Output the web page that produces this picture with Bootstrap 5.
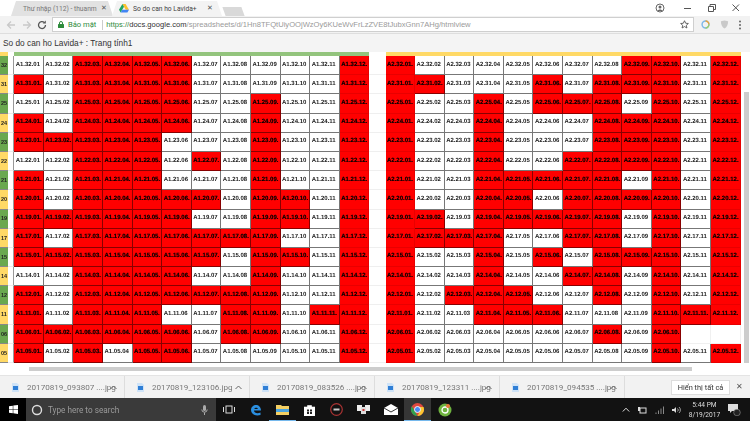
<!doctype html>
<html>

<head>
  <title>So do can ho Lavida+</title>
  <link href="https://cdn.jsdelivr.net/npm/bootstrap@5.3.0/dist/css/bootstrap.min.css" rel="stylesheet">
  <style>
    html, body { margin: 0; width: 750px; height: 421px; overflow: hidden; background: #fff; }
    body { font-family: "Liberation Sans", Arial, sans-serif; }
    .shot { width: 750px; height: 421px; filter: blur(.35px); }

    .tabstrip { height: 16px; background: #fff; }
    .tabshape { height: 15px; font: 6.7px Roboto, sans-serif; clip-path: polygon(0 100%, 5px 0, calc(100% - 5px) 0, 100% 100%); }
    .tab-off { width: 102px; margin-left: 11px; margin-top: 1px; background: #e2e2e2; color: #777; padding: 0 7px 0 8px; }
    .tab-on { width: 110px; margin-left: -1px; background: #f3f3f3; color: #444; padding: 0 9px 0 7px; }
    .tabtitle { white-space: nowrap; flex: 1; }
    .tabx { font-size: 7px; color: #555; line-height: 1; }
    .tabnew { width: 19px; height: 9px; margin: 5px 0 0 2px; background: #d9d9d9; transform: skewX(20deg); }
    .winbtns { gap: 14px; padding-right: 9px; }

    .toolbar { height: 18px; background: #f2f2f2; border-bottom: 1px solid #dedede; }
    .navbtns { width: 52px; padding: 0 5px 0 6px; }
    .omni { width: 642px; height: 15px; background: #fff; border: 1px solid #cfcfcf; font-size: 7.6px; padding-left: 5px; white-space: nowrap; overflow: hidden; }
    .sec-label { color: #2e8b3c; font-family: Roboto, sans-serif; font-size: 7.6px; }
    .sec-sep { width: 1px; height: 10px; background: #ccc; margin: 0 3px 0 6px; }
    .url-green { color: #2e8b3c; }
    .url-dark { color: #333; }
    .url-grey { color: #9a9a9a; }
    .omni-url { flex: 1; overflow: hidden; }
    .toolicons { flex: 1; padding: 0 8px 0 7px; }

    .docbar { height: 18px; background: #f4f4f4; font-size: 8.3px; color: #333; padding-left: 3px; line-height: 19px; }

    .sheet { height: 323px; position: relative; background: #fff; }
    .sheetgrid { display: grid; grid-template-columns: 8px 6.2px repeat(12, 29.6px) 16.2px repeat(12, 29.6px); grid-template-rows: 4px repeat(16, 19.2px); }
    .topnum { background: #ffd966; }
    .topgap { background: #fff; }
    .topgreen { grid-column: 3 / span 12; background: #93c47d; }
    .topyellow { grid-column: 16 / span 12; background: #ffd966; }
    .rownum { font-size: 5.5px; font-weight: 700; color: #222; display: flex; align-items: center; justify-content: center; border-bottom: 1px solid #888; overflow: hidden; }
    .num-g { background: #6aa84f; }
    .num-y { background: #ffd966; }
    .sidegap { border-bottom: 1px solid #ececec; border-right: 1px solid #999; }
    .midgap { border-bottom: 1px solid #efefef; }
    .unit { font-size: 6px; font-weight: 700; display: flex; align-items: center; padding-left: 1.5px; white-space: nowrap; overflow: hidden; border-right: 1px solid #777; border-bottom: 1px solid #777; color: #222; background: #fff; text-rendering: geometricPrecision; }
    .sold { background: #f00; color: #000; border-color: #800; -webkit-text-stroke: .15px #000; }
    .soldcol { border-color: #e80000; }
    .blankcell { border-color: #f0f0f0; }

    .hbar { height: 4px; margin: 4px 0 0 29px; width: 663px; background: #cdcdcd; }
    .vbar { position: absolute; right: 1px; top: 40px; width: 5px; height: 271px; background: #cdcdcd; }

    .shelf { height: 23px; background: #f2f2f2; border-top: 1px solid #e4e4e4; font: 8.1px Roboto, sans-serif; color: #777; }
    .dlitem { width: 125px; height: 100%; padding-left: 12px; border-right: 1px solid #ddd; flex-shrink: 0; }
    .dlname { width: 83px; margin-left: 8px; white-space: nowrap; }
    .showall { width: 59px; height: 15px; margin-left: 46px; background: #fff; border: 1px solid #ddd; color: #333; font-size: 7.4px; }
    .shelfx { margin-left: 6px; font-size: 8px; color: #555; line-height: 1; }

    .taskbar { height: 23px; background: #121212; }
    .startbtn { width: 26px; height: 100%; background: #000; }
    .searchbox { width: 190px; height: 100%; background: #3a3a3a; padding: 0 8px 0 5px; color: #9b9b9b; font: 8.2px Roboto, sans-serif; }
    .searchtext { flex: 1; margin-left: 5px; }
    .taskslot { width: 27px; height: 100%; flex-shrink: 0; }
    .slot-first { margin-left: -1px; }
    .slot-active { background: #363636; border-bottom: 1px solid #76b9ed; }
    .slot-mark { border-bottom: 1px solid #76b9ed; }
    .tray { flex: 1; padding-right: 9px; color: #ddd; font: 6.6px Roboto, sans-serif; }
    .clock { text-align: center; line-height: 10px; margin: 0 7px 0 7px; width: 33px; }
  </style>
</head>

<body>
  <div class="shot d-flex flex-column">

    <div class="tabstrip d-flex align-items-end">
      <div class="tabshape tab-off d-flex align-items-center gap-1">
        <svg width="9" height="7" viewBox="0 0 9 7"><path d="M.5 7V.5L4.500 4 8.500.5V7" fill="none" stroke="#d9443a" stroke-width="1.200"/></svg>
        <span class="tabtitle">Thư nhập (112) - thuanm</span>
        <span class="tabx">✕</span>
      </div>
      <div class="tabshape tab-on d-flex align-items-center gap-1">
        <svg width="10" height="9" viewBox="0 0 10 9"><path d="M3.400 0h3.200l3.400 5.800H6.700z" fill="#fbc02d"/><path d="M3.400 0L0 5.800 1.600 8.600 5 2.800z" fill="#1fa463"/><path d="M1.600 8.600h6.800L10 5.800H3.300z" fill="#4285f4"/></svg>
        <span class="tabtitle">So do can ho Lavida+</span>
        <span class="tabx">✕</span>
      </div>
      <div class="tabnew"></div>
      <div class="winbtns d-flex align-items-center ms-auto align-self-center">
        <svg class="me-1" width="10" height="10" viewBox="0 0 10 10"><circle cx="5" cy="5" r="4" fill="none" stroke="#666"/><circle cx="5" cy="4" r="1.500" fill="#666"/><path d="M2.500 8C3 6 7 6 7.500 8" fill="#666"/></svg>
        <svg width="10" height="10" viewBox="0 0 10 10"><path d="M1 5.500h7" stroke="#555"/></svg>
        <svg width="10" height="10" viewBox="0 0 10 10"><path d="M1.500 3.500h5v5h-5zM3 3.500V1.500h5.500v5H6.500" fill="none" stroke="#555"/></svg>
        <svg width="10" height="10" viewBox="0 0 10 10"><path d="M1.500 1.500l6.500 6.500M8 1.500L1.500 8" stroke="#555"/></svg>
      </div>
    </div>

    <div class="toolbar d-flex align-items-center">
      <div class="navbtns d-flex align-items-center justify-content-between">
        <svg width="10" height="10" viewBox="0 0 10 10"><path d="M9 5H1.500M5 1.500L1.500 5 5 8.500" fill="none" stroke="#c9c9c9" stroke-width="1.300"/></svg>
        <svg width="10" height="10" viewBox="0 0 10 10"><path d="M1 5h7.500M5 1.500L8.500 5 5 8.500" fill="none" stroke="#c9c9c9" stroke-width="1.300"/></svg>
        <svg width="10" height="10" viewBox="0 0 10 10"><path d="M8.500 5A3.500 3.500 0 1 1 7.300 2.400" fill="none" stroke="#555" stroke-width="1.300"/><path d="M8.800 .6v3H5.800z" fill="#555"/></svg>
      </div>
      <div class="omni d-flex align-items-center">
        <svg class="me-1" width="6" height="7" viewBox="0 0 6 7"><path d="M1.500 3V2a1.500 1.500 0 0 1 3 0v1" fill="none" stroke="#2e8b3c"/><rect y="3" width="6" height="4" rx=".5" fill="#2e8b3c"/></svg>
        <span class="sec-label">Bảo mật</span>
        <span class="sec-sep"></span>
        <span class="omni-url"><span class="url-green">https://</span><span class="url-dark">docs.google.com</span><span class="url-grey">/spreadsheets/d/1Hn8TFQtUiyOOjWzOy6KUeWvFrLzZVE8tJubxGnn7AHg/htmlview</span></span>
        <svg class="me-1" width="9" height="9" viewBox="0 0 10 10"><path d="M5 .8l1.300 2.800 3 .3-2.300 2 .7 3L5 7.300 2.300 8.900l.7-3-2.300-2 3-.3z" fill="none" stroke="#555"/></svg>
      </div>
      <div class="toolicons d-flex align-items-center justify-content-between">
        <svg width="9" height="9" viewBox="0 0 10 10"><circle cx="5" cy="5" r="3.800" fill="none" stroke="#7db7e8" stroke-width="1.600"/><path d="M5 1.200A3.800 3.800 0 0 1 8.800 5" fill="none" stroke="#e8a33d" stroke-width="1.600"/><path d="M8.800 5A3.800 3.800 0 0 1 5 8.800" fill="none" stroke="#9bd070" stroke-width="1.600"/></svg>
        <svg width="9" height="9" viewBox="0 0 10 10"><path d="M1 1.500L5 .5l4 1c0 4-1.500 7-4 8-2.500-1-4-4-4-8z" fill="#c9c9c9"/></svg>
        <svg width="4" height="10" viewBox="0 0 4 10"><circle cx="2" cy="1.500" r="1" fill="#666"/><circle cx="2" cy="5" r="1" fill="#666"/><circle cx="2" cy="8.500" r="1" fill="#666"/></svg>
      </div>
    </div>

    <div class="docbar">So do can ho Lavida+ : Trang tính1</div>

    <div class="sheet">
      <div id="grid" class="sheetgrid">
        <div class="topnum"></div>
        <div class="topgap"></div>
        <div class="topgreen"></div>
        <div class="topgap"></div>
        <div class="topyellow"></div>
      </div>
      <div class="hbar"></div>
      <div class="vbar"></div>
    </div>

    <div class="shelf d-flex align-items-center">
      <div class="dlitem d-flex align-items-center">
        <svg width="7" height="9" viewBox="0 0 7 9"><path d="M0 0h5l2 2v7H0z" fill="#cfe3f7"/><rect x="1" y="3" width="5" height="4" fill="#2f7fd6"/></svg>
        <span class="dlname">20170819_093807 ....jpg</span>
        <svg width="7" height="5" viewBox="0 0 7 5"><path d="M.5 4L3.500 1l3 3" fill="none" stroke="#666"/></svg>
      </div>
      <div class="dlitem d-flex align-items-center">
        <svg width="7" height="9" viewBox="0 0 7 9"><path d="M0 0h5l2 2v7H0z" fill="#cfe3f7"/><rect x="1" y="3" width="5" height="4" fill="#2f7fd6"/></svg>
        <span class="dlname">20170819_123106.jpg</span>
        <svg width="7" height="5" viewBox="0 0 7 5"><path d="M.5 4L3.500 1l3 3" fill="none" stroke="#666"/></svg>
      </div>
      <div class="dlitem d-flex align-items-center">
        <svg width="7" height="9" viewBox="0 0 7 9"><path d="M0 0h5l2 2v7H0z" fill="#cfe3f7"/><rect x="1" y="3" width="5" height="4" fill="#2f7fd6"/></svg>
        <span class="dlname">20170819_083526 ....jpg</span>
        <svg width="7" height="5" viewBox="0 0 7 5"><path d="M.5 4L3.500 1l3 3" fill="none" stroke="#666"/></svg>
      </div>
      <div class="dlitem d-flex align-items-center">
        <svg width="7" height="9" viewBox="0 0 7 9"><path d="M0 0h5l2 2v7H0z" fill="#cfe3f7"/><rect x="1" y="3" width="5" height="4" fill="#2f7fd6"/></svg>
        <span class="dlname">20170819_123311 ....jpg</span>
        <svg width="7" height="5" viewBox="0 0 7 5"><path d="M.5 4L3.500 1l3 3" fill="none" stroke="#666"/></svg>
      </div>
      <div class="dlitem d-flex align-items-center">
        <svg width="7" height="9" viewBox="0 0 7 9"><path d="M0 0h5l2 2v7H0z" fill="#cfe3f7"/><rect x="1" y="3" width="5" height="4" fill="#2f7fd6"/></svg>
        <span class="dlname">20170819_094535 ....jpg</span>
        <svg width="7" height="5" viewBox="0 0 7 5"><path d="M.5 4L3.500 1l3 3" fill="none" stroke="#666"/></svg>
      </div>
      <div class="showall d-flex align-items-center justify-content-center">Hiển thị tất cả</div>
      <span class="shelfx">✕</span>
    </div>

    <div class="taskbar d-flex align-items-center">
      <div class="startbtn d-flex align-items-center justify-content-center">
        <svg width="9" height="9" viewBox="0 0 9 9"><path d="M0 1.300L3.800.7v3.500H0zM4.300.6L9 0v4.200H4.300zM0 4.700h3.800v3.600L0 7.700zM4.300 4.700H9V9l-4.700-.7z" fill="#fff"/></svg>
      </div>
      <div class="searchbox d-flex align-items-center">
        <svg width="12" height="12" viewBox="0 0 12 12"><circle cx="6" cy="6" r="4.500" fill="none" stroke="#ddd" stroke-width="1.400"/></svg>
        <span class="searchtext">Type here to search</span>
        <svg width="7" height="10" viewBox="0 0 7 10"><rect x="2" y="0" width="3" height="6" rx="1.500" fill="#aaa"/><path d="M.8 4.500a2.700 2.700 0 0 0 5.400 0M3.500 7.500V10" fill="none" stroke="#aaa"/></svg>
      </div>
      <div class="taskslot slot-first d-flex align-items-center justify-content-center">
        <svg width="12" height="9" viewBox="0 0 12 9"><rect x="3" y="1" width="6" height="7" fill="none" stroke="#ddd"/><path d="M.5 2v5M11.500 2v5" stroke="#ddd"/></svg>
      </div>
      <div class="taskslot d-flex align-items-center justify-content-center">
        <svg width="12" height="12" viewBox="0 0 12 12"><path d="M1 6C1 3 3.500 1 6 1s5 2 5 5.500H4C4 9 7.500 10 10.500 8.500V11C6 12.500 1 10.500 1 6zM4.200 5h3.600C7.800 3.200 4.800 3.200 4.200 5z" fill="#2b8fe0"/></svg>
      </div>
      <div class="taskslot slot-mark d-flex align-items-center justify-content-center">
        <svg width="13" height="11" viewBox="0 0 13 11"><path d="M0 1h5l1 1h7v9H0z" fill="#f4cf62"/><rect y="5" width="13" height="3" fill="#4aa3df"/></svg>
      </div>
      <div class="taskslot d-flex align-items-center justify-content-center">
        <svg width="11" height="12" viewBox="0 0 11 12"><path d="M0 3h11v9H0zM3.500 3V1.500h4V3" fill="#fff" stroke="#fff" stroke-width=".6"/><path d="M3 5.500h2v2H3zM6 5.500h2v2H6zM3 8h2v2H3zM6 8h2v2H6z" fill="#222"/></svg>
      </div>
      <div class="taskslot d-flex align-items-center justify-content-center">
        <svg width="13" height="13" viewBox="0 0 13 13"><circle cx="6.500" cy="6.500" r="5.800" fill="#111" stroke="#a33" stroke-width="1.200"/><rect x="3.500" y="5.500" width="6" height="2" fill="#ccc"/></svg>
      </div>
      <div class="taskslot d-flex align-items-center justify-content-center">
        <svg width="13" height="11" viewBox="0 0 13 11"><rect x="0" y="1" width="5" height="6" fill="#eee"/><rect x="8" y="1" width="5" height="6" fill="#eee"/><rect x="4" y="3" width="5" height="7" fill="#ddd"/><rect x="5.500" y="5" width="2" height="2" fill="#c33"/></svg>
      </div>
      <div class="taskslot d-flex align-items-center justify-content-center">
        <svg width="14" height="11" viewBox="0 0 14 11"><path d="M0 4l7-4 7 4v7H0z" fill="#fff"/><path d="M0 4l7 4 7-4" fill="none" stroke="#333"/></svg>
      </div>
      <div class="taskslot slot-active d-flex align-items-center justify-content-center">
        <svg width="13" height="13" viewBox="0 0 13 13"><circle cx="6.500" cy="6.500" r="6.500" fill="#e0483e"/><path d="M6.500 13A6.500 6.500 0 0 1 .9 3.200L4 8.500z" fill="#2fa24e"/><path d="M6.500 13A6.500 6.500 0 0 0 12.500 4H6.500L8.800 8.500z" fill="#fbc531"/><circle cx="6.500" cy="6.500" r="3" fill="#4a8af4" stroke="#fff" stroke-width=".9"/></svg>
      </div>
      <div class="taskslot d-flex align-items-center justify-content-center">
        <svg width="14" height="14" viewBox="0 0 14 14"><circle cx="7" cy="7" r="6.500" fill="#6fb33f"/><circle cx="7" cy="7" r="3" fill="none" stroke="#fff" stroke-width="1.300"/><circle cx="10" cy="3" r="2" fill="#e8763a"/></svg>
      </div>
      <div class="tray d-flex align-items-center justify-content-end">
        <svg class="me-1" width="8" height="5" viewBox="0 0 8 5"><path d="M.8 4.500L4 1.200l3.200 3.300" fill="none" stroke="#ddd"/></svg>
        <svg class="mx-1" width="9" height="8" viewBox="0 0 9 8"><rect x="2" y="2" width="6" height="5" fill="none" stroke="#ddd"/><path d="M0 1h2v4H0z" fill="#ddd"/></svg>
        <svg class="mx-1" width="9" height="8" viewBox="0 0 9 8"><path d="M1 8V6.500M3.500 8V4.500M6 8V2.500M8.500 8V.5" stroke="#888"/></svg>
        <svg class="ms-1" width="9" height="8" viewBox="0 0 9 8"><path d="M0 3h2l2-2v6L2 5H0z" fill="#ddd"/><path d="M5.500 2.500a2 2 0 0 1 0 3M7 1a4 4 0 0 1 0 6" fill="none" stroke="#ddd" stroke-width=".7"/></svg>
        <div class="clock">5:44 PM<br>8/19/2017</div>
        <svg width="13" height="12" viewBox="0 0 13 12"><path d="M0 0h10v7H4L2 9V7H0z" fill="#ddd"/><circle cx="9" cy="8.500" r="3.300" fill="#222" stroke="#aaa" stroke-width=".5"/></svg>
      </div>
    </div>

  </div>

  <script src="https://cdn.jsdelivr.net/npm/bootstrap@5.3.0/dist/js/bootstrap.bundle.min.js"></script>
  <script>
    // floor, then the red units of block A1 and block A2
    const floors = [
      ["32", [3, 4, 5, 6, 12], [1, 9, 10, 12]],
      ["31", [1, 3, 4, 5, 6, 12], [1, 2, 6, 8, 9, 10, 12]],
      ["25", [3, 4, 5, 6, 9, 12], [1, 4, 6, 7, 8, 10, 12]],
      ["24", [1, 3, 4, 5, 6, 9, 12], [1, 4, 8, 9, 10, 12]],
      ["23", [1, 2, 3, 4, 5, 9, 12], [1, 4, 8, 9, 10, 12]],
      ["22", [3, 4, 5, 7, 9, 12], [1, 4, 7, 8, 9, 10, 12]],
      ["21", [1, 3, 4, 5, 9, 12], [1, 4, 5, 6, 7, 8, 10, 12]],
      ["20", [1, 3, 4, 5, 6, 7, 9, 10, 12], [1, 4, 5, 7, 8, 9, 10, 12]],
      ["19", [1, 2, 3, 4, 5, 6, 9, 10, 12], [1, 2, 4, 5, 6, 7, 8, 10, 12]],
      ["17", [1, 3, 4, 5, 6, 7, 8, 9, 12], [1, 2, 3, 4, 7, 8, 10, 12]],
      ["15", [1, 2, 3, 4, 5, 6, 7, 9, 10, 12], [1, 4, 6, 8, 9, 10, 12]],
      ["14", [3, 4, 5, 6, 9, 12], [1, 4, 7, 8, 10, 12]],
      ["12", [1, 3, 4, 5, 6, 7, 8, 9, 12], [1, 3, 4, 5, 8, 10, 12]],
      ["11", [1, 3, 4, 5, 8, 9, 11, 12], [1, 4, 5, 6, 10, 11, 12]],
      ["06", [1, 2, 3, 4, 5, 6, 8, 9, 12], [1, 8, 10]],
      ["05", [1, 3, 5, 6, 12], [1, 10, 12]]
    ];
    const grid = document.getElementById("grid");

    function addCell(className, text) {
      const cell = document.createElement("div");
      cell.className = className;
      if (text) cell.textContent = text;
      grid.appendChild(cell);
    }

    function addBlock(block, floor, red) {
      for (let i = 1; i <= 12; i++) {
        const unit = String(i).padStart(2, "0");
        // A2.06.11 and A2.06.12 have nothing in them
        if (block == "A2" && floor == "06" && i > 10) {
          addCell("unit blankcell");
        } else if (red.includes(i)) {
          // the outer red columns run together, no dark lines between floors
          const plain = i == 12 || (block == "A2" && i == 1);
          addCell("unit sold" + (plain ? " soldcol" : ""), `${block}.${floor}.${unit}.`);
        } else {
          addCell("unit", `${block}.${floor}.${unit}`);
        }
      }
    }

    floors.forEach(([floor, a1, a2], index) => {
      addCell("rownum " + (index % 2 ? "num-y" : "num-g"), floor);
      addCell("sidegap");
      addBlock("A1", floor, a1);
      addCell("midgap");
      addBlock("A2", floor, a2);
    });
  </script>
</body>

</html>
